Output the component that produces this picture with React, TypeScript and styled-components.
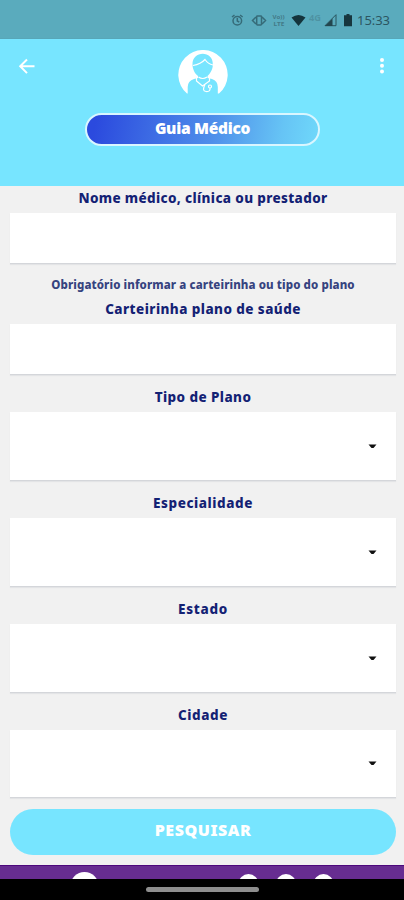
import React from "react";
import styled, { createGlobalStyle } from "styled-components";

const GlobalStyle = createGlobalStyle`
  * { box-sizing: border-box; }
  body { margin: 0; background: #f1f1f1; font-family: "Noto Sans", "Open Sans", sans-serif; }
`;

const Screen = styled.div`
  width: 404px;
  height: 900px;
  display: flex;
  flex-direction: column;
  overflow: hidden;
  background: #f1f1f1;
`;

const StatusBar = styled.div`
  flex: none;
  height: 39px;
  padding: 1px 14px 0 231px;
  display: flex;
  align-items: center;
  background: #5aabbd;
  border-bottom: 1px solid #58a6b8;
`;

const StatusIcons = styled.svg`
  display: block;
  flex: none;
`;

const Clock = styled.span`
  margin-left: 2px;
  font: 400 13px/16px "Noto Sans", sans-serif;
  letter-spacing: -0.05px;
  color: #2c5661;
  white-space: nowrap;
`;

const Header = styled.header`
  flex: none;
  height: 147px;
  background: #77e5ff;
  display: flex;
  flex-direction: column;
  align-items: center;
`;

const TopRow = styled.div`
  width: 100%;
  height: 74px;
  padding: 11px 13px 0 17px;
  display: grid;
  grid-template-columns: 60px 1fr 60px;
`;

const IconButton = styled.button<{ $end?: boolean }>`
  height: 20px;
  margin-top: 7px;
  padding: 0;
  border: 0;
  background: none;
  display: flex;
  justify-content: ${(p) => (p.$end ? "flex-end" : "flex-start")};
`;

const Logo = styled.svg`
  justify-self: center;
  display: block;
  margin-right: 2px;
`;

const Title = styled.h1`
  margin: 0 0 0 1px;
  width: 235px;
  height: 33px;
  border: 2px solid #d9f6ff;
  border-radius: 17px;
  background: linear-gradient(100deg, #2b4ade 4%, #4f8fea 55%, #66c4f5 84%, #6fd8fa 100%);
  color: #fff;
  font-size: 15.5px;
  font-weight: 900;
  line-height: 26px;
  letter-spacing: -0.3px;
  text-align: center;
`;

const Form = styled.form`
  flex: none;
  height: 679px;
  padding: 0 8px 0 10px;
  display: flex;
  flex-direction: column;
`;

const Label = styled.label<{ $height: number; $spacing?: number }>`
  flex: none;
  height: ${(p) => p.$height}px;
  display: flex;
  align-items: flex-end;
  justify-content: center;
  padding-bottom: 5px;
  color: #132174;
  font-size: 13.5px;
  font-weight: 800;
  line-height: 20px;
  letter-spacing: ${(p) => p.$spacing ?? 0}px;
  white-space: nowrap;
`;

const Hint = styled.p<{ $spacing?: number }>`
  flex: none;
  margin: 0;
  height: 29px;
  padding-top: 12px;
  color: #36437f;
  font-size: 11.5px;
  font-weight: 800;
  line-height: 18px;
  letter-spacing: ${(p) => p.$spacing ?? 0}px;
  text-align: center;
  white-space: nowrap;
`;

const Field = styled.div<{ $height: number }>`
  flex: none;
  height: ${(p) => p.$height}px;
  padding-right: 19px;
  display: flex;
  align-items: center;
  justify-content: flex-end;
  background: #fff;
  border-bottom: 1px solid #d4d6da;
  box-shadow: 0 1px 1px #e3e4e6;
`;

const Submit = styled.button`
  flex: none;
  height: 46px;
  margin-top: 11px;
  padding: 0 0 4px;
  border: 0;
  border-radius: 24px;
  background: #77e5ff;
  color: #fff;
  font: 900 16px/20px "Noto Sans", sans-serif;
  letter-spacing: 0.55px;
`;

const BottomStrip = styled.div`
  flex: none;
  height: 14px;
  background: #672d91;
  border-top: 1px solid #4d087c;
`;

const NavigationBar = styled.div`
  flex: none;
  height: 21px;
  background: #000;
  display: flex;
  justify-content: center;
  padding-top: 8px;
`;

const Handle = styled.div`
  width: 113px;
  height: 5px;
  margin-left: 1px;
  border-radius: 2.5px;
  background: #8e8e8e;
`;

function Caret() {
  return (
    <svg width="9" height="5" viewBox="0 0 9 5">
      <path d="M.5.5h8L5.5 4h-2Z" fill="#111" />
    </svg>
  );
}

const selects = [
  { label: "Tipo de Plano", spacing: 0.42, height: 69, gap: 37 },
  { label: "Especialidade", spacing: 0.55, height: 69, gap: 37 },
  { label: "Estado", spacing: 0.7, height: 69, gap: 37 },
  { label: "Cidade", spacing: 0.6, height: 68, gap: 37 },
];

export default function App() {
  return (
    <>
      <GlobalStyle />
      <Screen>
        <StatusBar>
          <StatusIcons width="124" height="16" viewBox="231 12 124 16">
            <g fill="none" stroke="#366b78" strokeWidth="1.5">
              <circle cx="237.3" cy="20.7" r="4.3" />
              <path d="M237.3 18v3l2 1.2M232 17l2.5-2M242.6 17l-2.5-2M256 17l-3.5 3.5L256 24M262 17l3.5 3.5L262 24" />
              <rect x="256.7" y="16" width="4.8" height="9" rx=".7" />
            </g>
            <g fill="#437a88" fontFamily="Noto Sans" fontSize="5" fontWeight="700">
              <text x="272.5" y="18.5" textLength="12" lengthAdjust="spacingAndGlyphs">Vo))</text>
              <text x="273.5" y="26" textLength="11" lengthAdjust="spacingAndGlyphs">LTE</text>
              <text x="309" y="20.5" fontSize="8.5" fillOpacity=".5" textLength="12" lengthAdjust="spacingAndGlyphs">4G</text>
            </g>
            <path d="M291.5 17.5Q298.5 12.5 305.5 17.5L298.5 26Z" fill="#14343c" />
            <path d="M325 25.7 336 14.7V25.7Z" fill="none" stroke="#29545e" />
            <path d="M325 26 332.5 18.5V26Z" fill="#23464f" />
            <path d="M346.5 14h3v1.2h2.5v11h-8v-11h2.5Z" fill="#17363e" />
          </StatusIcons>
          <Clock>15:33</Clock>
        </StatusBar>
        <Header>
          <TopRow>
            <IconButton type="button" aria-label="Voltar">
              <svg width="20" height="20" viewBox="0 0 20 20">
                <path d="M17.5 9.3H3.5M10 2.5 3.2 9.3 10 16.1" fill="none" stroke="#fff" strokeWidth="2" />
              </svg>
            </IconButton>
            <Logo width="50" height="44" viewBox="0 0 50 44">
              <path d="M9 43.5A24.7 24.7 0 1 1 41 43.5H9Z" fill="#fff" />
              <path
                d="M14.5 14.5C14 0 35.5 0 34.8 14.5 35 20 31.5 24 29.5 26V28L34 29Q39.8 31 39.8 37V44H9.7V37Q9.7 31 16 29L20 28V26C17 24 14.5 19 14.5 14.5Z"
                fill="#77e5ff"
              />
              <g fill="none" stroke="#fff" strokeWidth="1.2">
                <path d="M15 15.5Q23 14 27 9.5 30 14 35 15" />
                <path d="M18.5 27V31L24.5 36 31.5 31V27M20.5 27Q24.7 30 29 27" />
                <path d="M27 34.5Q23.5 41 28 41.5 32.5 42 32 38" />
                <circle cx="32" cy="36.5" r="1.5" />
              </g>
            </Logo>
            <IconButton type="button" aria-label="Menu" $end>
              <svg width="18" height="20" viewBox="0 0 18 20">
                <g fill="#fff">
                  <circle cx="9" cy="3" r="2" />
                  <circle cx="9" cy="8.8" r="2" />
                  <circle cx="9" cy="14.6" r="2" />
                </g>
              </svg>
            </IconButton>
          </TopRow>
          <Title>Guia Médico</Title>
        </Header>
        <Form>
          <Label $height={27} $spacing={0.35}>Nome médico, clínica ou prestador</Label>
          <Field $height={51} />
          <Hint $spacing={0.1}>Obrigatório informar a carteirinha ou tipo do plano</Hint>
          <Label $height={31} $spacing={0.43}>Carteirinha plano de saúde</Label>
          <Field $height={51} />
          {selects.map((s) => (
            <React.Fragment key={s.label}>
              <Label $height={s.gap} $spacing={s.spacing}>{s.label}</Label>
              <Field $height={s.height}>
                <Caret />
              </Field>
            </React.Fragment>
          ))}
          <Submit type="button">PESQUISAR</Submit>
        </Form>
        <BottomStrip>
          <svg width="404" height="13" viewBox="0 866 404 13" display="block">
            <g fill="#fff">
              <circle cx="84.5" cy="886" r="14" />
              <circle cx="248.5" cy="884" r="10" />
              <circle cx="286" cy="884" r="10" />
              <circle cx="323.5" cy="884" r="10" />
            </g>
          </svg>
        </BottomStrip>
        <NavigationBar>
          <Handle />
        </NavigationBar>
      </Screen>
    </>
  );
}
